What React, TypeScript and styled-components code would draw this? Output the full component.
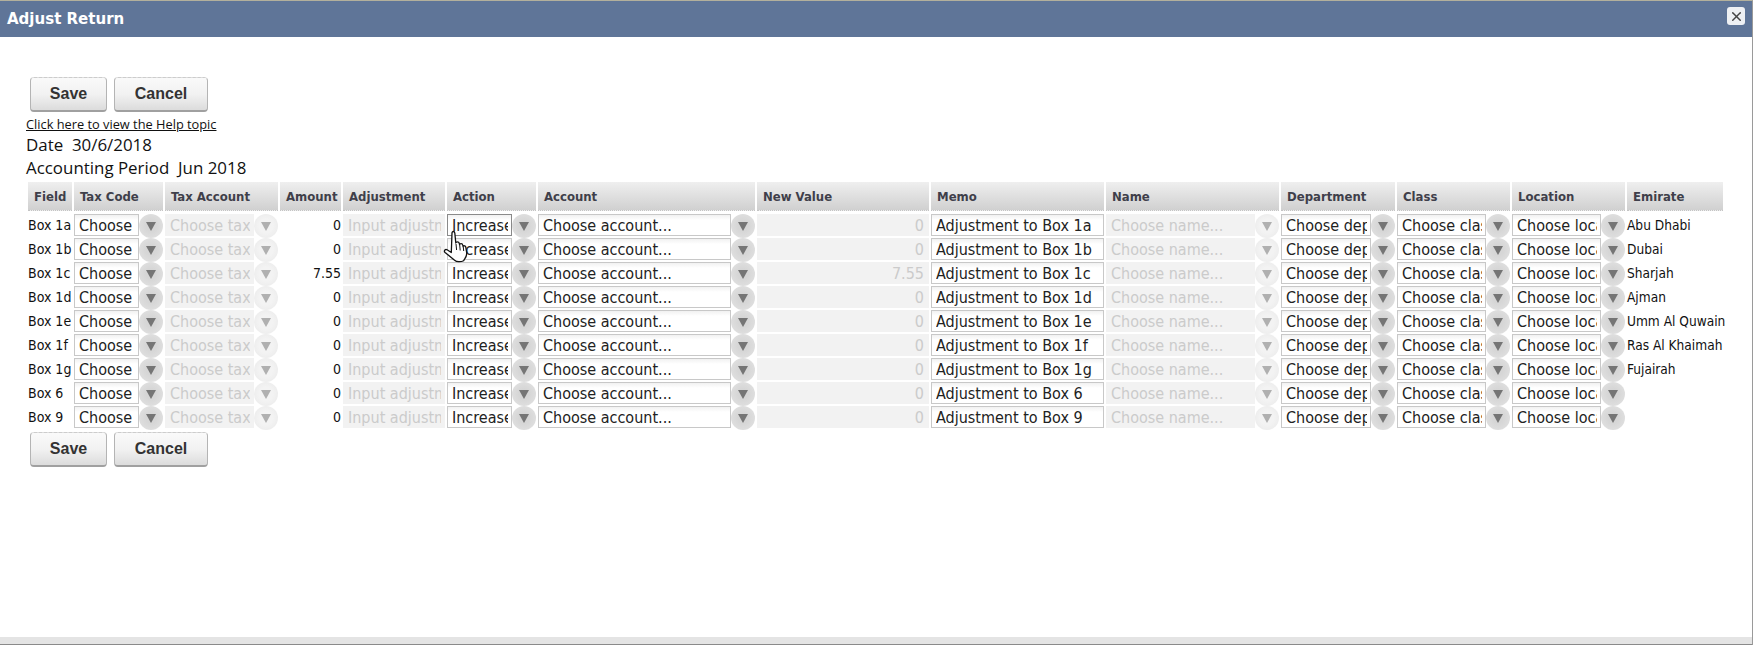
import React from "react";
import styled, { createGlobalStyle } from "styled-components";
import { X } from "lucide-react";

const Global = createGlobalStyle`
  html, body { margin: 0; padding: 0; background: #fff; }
  body { font-family: "Open Sans", sans-serif; overflow: hidden; }
`;

const tahoma = `"DejaVu Sans", "Open Sans", sans-serif`;

const Page = styled.div`
  width: 1753px;
  height: 645px;
  box-sizing: border-box;
  display: flex;
  flex-direction: column;
  border-right: 1px solid #9a9a9a;
  border-top: 1px solid #b3b09c;
  position: relative;
  overflow: hidden;
`;
const TitleBar = styled.header`
  height: 36px;
  flex: none;
  background: #5f7598;
  display: flex;
  align-items: center;
  justify-content: space-between;
  padding: 0 7px;
`;
const Title = styled.h1`
  margin: -2px 0 0;
  font: bold 16.7px ${tahoma};
  font-stretch: condensed;
  color: #fff;
`;
const CloseButton = styled.button`
  width: 18px;
  height: 18px;
  padding: 0;
  border: 0;
  border-radius: 3px;
  background: #eef0f3;
  color: #444;
  display: flex;
  align-items: center;
  justify-content: center;
  margin-top: -6px;
`;
const Main = styled.main`
  flex: 1;
  padding: 40px 0 0 26px;
`;
const ButtonRow = styled.div<{ $top?: number }>`
  display: flex;
  gap: 7px;
  margin: ${(p) => p.$top ?? 0}px 0 0 4px;
`;
const ActionButton = styled.button<{ $w: number }>`
  width: ${(p) => p.$w}px;
  height: 35px;
  box-sizing: border-box;
  padding: 0;
  border: 1px solid #b4b4b4;
  border-top: 1px dashed #cccccc;
  border-bottom: 2px solid #a0a0a0;
  border-radius: 4px;
  background: linear-gradient(#fafafa, #f2f2f2 50%, #dcdcdc);
  font: bold 16px "Liberation Sans", Arial, sans-serif;
  color: #333;
`;
const HelpLink = styled.a`
  display: block;
  margin: 5px 0 0;
  font-size: 12.8px;
  line-height: 14px;
  color: #111;
  text-decoration: underline;
`;
const InfoLine = styled.div<{ $top?: number }>`
  margin: ${(p) => p.$top ?? 0}px 0 0;
  font-size: 16.9px;
  line-height: 23px;
  color: #111;
  white-space: pre;
`;
const Table = styled.div`
  margin: 3px 0 0 2px;
  display: grid;
  grid-template-columns: 44px 89px 113px 61px 102px 89px 217px 172px 173px 173px 114px 113px 113px 96px;
  grid-template-rows: 32px repeat(9, 24px);
  column-gap: 2px;
  width: fit-content;
`;
const HeaderCell = styled.div`
  height: 29px;
  box-sizing: border-box;
  padding-left: 6px;
  display: flex;
  align-items: center;
  background: linear-gradient(#efefef, #d0d0d0);
  border-bottom: 1px dotted #c4c4c4;
  font: bold 13px ${tahoma};
  font-stretch: condensed;
  color: #3f3f4a;
  white-space: nowrap;
`;
const TextCell = styled.div<{ $right?: boolean; $size?: number }>`
  height: 22px;
  display: flex;
  align-items: center;
  justify-content: ${(p) => (p.$right ? "flex-end" : "flex-start")};
  font: ${(p) => p.$size ?? 14}px ${tahoma};
  font-stretch: condensed;
  color: #111;
  white-space: nowrap;
`;
const Field = styled.input<{ $focus?: boolean; $right?: boolean }>`
  flex: 1;
  width: 100%;
  min-width: 0;
  height: 22px;
  box-sizing: border-box;
  margin: 0;
  padding: 0 ${(p) => (p.$right ? 4 : 3)}px 0 4px;
  border: 1px solid ${(p) => (p.$focus ? "#8a8a8a" : "#c8c8c8")};
  border-radius: 0;
  background: linear-gradient(#f1f1f1, #fff 5px);
  font: 16px ${tahoma};
  font-stretch: condensed;
  color: #222;
  text-align: ${(p) => (p.$right ? "right" : "left")};
  outline: none;
  &:disabled {
    border-color: transparent;
    background: #f2f2f2;
    color: #cbcbcb;
    opacity: 1;
  }
`;
const Combo = styled.div`
  display: flex;
  align-items: flex-start;
  height: 24px;
`;
const Arrow = styled.span<{ $off?: boolean }>`
  flex: none;
  width: 24px;
  height: 24px;
  border-radius: 50%;
  display: flex;
  align-items: center;
  justify-content: center;
  background: ${(p) =>
    p.$off
      ? "radial-gradient(circle, #f3f3f3 40%, #ececec 80%, #f4f4f4)"
      : "radial-gradient(circle, #d6d6d6 30%, #dedede 70%, #ebebeb)"};
  &::after {
    content: "";
    width: 0;
    height: 0;
    border-left: 5px solid transparent;
    border-right: 5px solid transparent;
    border-top: 9px solid ${(p) => (p.$off ? "#b0b0b0" : "#757575")};
  }
`;
const Cursor = styled.svg`
  position: absolute;
  left: 443px;
  top: 229px;
  width: 27px;
  height: 33px;
`;
const Footer = styled.footer`
  height: 8px;
  flex: none;
  box-sizing: border-box;
  background: #e4e4e4;
  border-bottom: 1px solid #8a8a8a;
`;

const rows: { f: string; a: string; nv: string; e: string }[] = [
  { f: "Box 1a", a: "0", nv: "0", e: "Abu Dhabi" },
  { f: "Box 1b", a: "0", nv: "0", e: "Dubai" },
  { f: "Box 1c", a: "7.55", nv: "7.55", e: "Sharjah" },
  { f: "Box 1d", a: "0", nv: "0", e: "Ajman" },
  { f: "Box 1e", a: "0", nv: "0", e: "Umm Al Quwain" },
  { f: "Box 1f", a: "0", nv: "0", e: "Ras Al Khaimah" },
  { f: "Box 1g", a: "0", nv: "0", e: "Fujairah" },
  { f: "Box 6", a: "0", nv: "0", e: "" },
  { f: "Box 9", a: "0", nv: "0", e: "" },
];
const headers = [
  "Field", "Tax Code", "Tax Account", "Amount", "Adjustment", "Action", "Account",
  "New Value", "Memo", "Name", "Department", "Class", "Location", "Emirate",
];

function Select({ value, off, focus }: { value: string; off?: boolean; focus?: boolean }) {
  return (
    <Combo>
      <Field readOnly value={value} disabled={off} $focus={focus} />
      <Arrow $off={off} />
    </Combo>
  );
}

function Buttons({ top }: { top?: number }) {
  return (
    <ButtonRow $top={top}>
      <ActionButton $w={77}>Save</ActionButton>
      <ActionButton $w={94}>Cancel</ActionButton>
    </ButtonRow>
  );
}

export default function App() {
  return (
    <Page>
      <Global />
      <TitleBar>
        <Title>Adjust Return</Title>
        <CloseButton aria-label="Close">
          <X size={15} strokeWidth={2.4} />
        </CloseButton>
      </TitleBar>
      <Main>
        <Buttons />
        <HelpLink href="#">Click here to view the Help topic</HelpLink>
        <InfoLine $top={2}>Date  30/6/2018</InfoLine>
        <InfoLine>Accounting Period  Jun 2018</InfoLine>
        <Table>
          {headers.map((h) => (
            <HeaderCell key={h}>{h}</HeaderCell>
          ))}
          {rows.map((r, i) => (
            <React.Fragment key={r.f}>
              <TextCell>{r.f}</TextCell>
              <Select value="Choose tax code..." />
              <Select value="Choose tax account..." off />
              <TextCell $right>{r.a}</TextCell>
              <Field readOnly disabled value="Input adjustment..." />
              <Select value="Increase" focus={i === 0} />
              <Select value="Choose account..." />
              <Field readOnly disabled value={r.nv} $right />
              <Field readOnly value={`Adjustment to ${r.f}`} />
              <Select value="Choose name..." off />
              <Select value="Choose department..." />
              <Select value="Choose class..." />
              <Select value="Choose location..." />
              <TextCell $size={13.6}>{r.e}</TextCell>
            </React.Fragment>
          ))}
        </Table>
        <Buttons top={2} />
      </Main>
      <Footer />
      <Cursor viewBox="0 0 27 33">
        <path
          d="M9 3c0-2 2.6-2 2.8 0l1 10c.3-1.6 3-1.6 3.3 0l.5 1.6c.3-1.5 2.8-1.3 3.1.3l.4 1.6c.4-1.2 2.5-.9 2.7.6l.8 5c.4 3-.6 5.200-2 7l-1 1.600c-3 1.600-7 1.200-9-.5l-9.500-7.700c-1.700-1.500.2-3.700 2-2.700l4.200 2.700z"
          fill="#fff"
          stroke="#111"
          strokeWidth="1.300"
          strokeLinejoin="round"
        />
        <path d="M13 14l.6 6M16.700 15l.5 5.500M20.300 17l.4 4" stroke="#111" strokeWidth="1" fill="none" />
      </Cursor>
    </Page>
  );
}
